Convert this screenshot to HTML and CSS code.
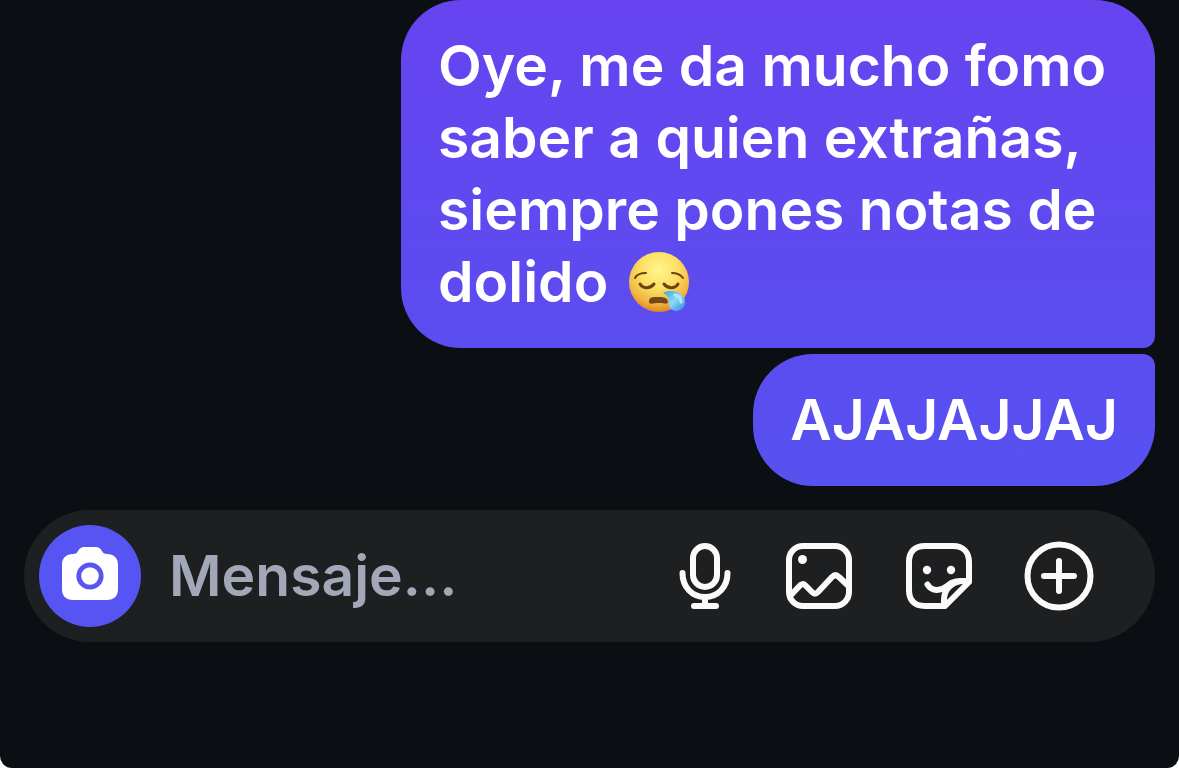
FILE: index.html
```html
<!DOCTYPE html>
<html lang="es">

<head>
    <meta charset="UTF-8">
    <meta name="viewport" content="width=device-width, initial-scale=1">
    <title>Mensajes</title>
    <link rel="stylesheet" href="styles.css">
</head>

<body>

    <main class="chat">
        <section class="messages">
            <p class="bubble first">Oye, me da mucho fomo saber a quien extrañas, siempre pones notas de dolido
                <svg class="emoji" viewBox="0 0 60 60" role="img" aria-label="Cara somnolienta">
                    <defs>
                        <radialGradient id="face" cx="50%" cy="30%" r="70%">
                            <stop offset="0" stop-color="#fff58f" />
                            <stop offset="0.45" stop-color="#fbe064" />
                            <stop offset="0.8" stop-color="#f2b640" />
                            <stop offset="1" stop-color="#df8427" />
                        </radialGradient>
                        <linearGradient id="drop" x1="0" y1="0" x2="1" y2="1">
                            <stop offset="0" stop-color="#3aa4e0" />
                            <stop offset="0.5" stop-color="#8bd8fb" />
                            <stop offset="1" stop-color="#2589d6" />
                        </linearGradient>
                    </defs>
                    <circle cx="30" cy="30" r="30" fill="url(#face)" />
                    <g fill="none" stroke="#70400d" stroke-linecap="round">
                        <path d="M6 26C8 22 12 21 17 21M43 21C48 21 51 22 54 26" stroke-width="2" />
                        <path d="M11 32C14 37 21 37 25 32M35 32C39 37 46 37 49 32" stroke-width="3" />
                    </g>
                    <path d="M20 50C20 44 25 45 30 45C35 45 39 46 39 50C39 53 35 51 30 51C25 51 20 53 20 50Z" fill="#75471c" />
                    <path d="M34 41C41 37 55 39 56 49C57 55 52 59 47 59C42 58 39 55 40 50C40 45 38 43 34 41Z" fill="url(#drop)" />
                    <path d="M46 43C50 44 52 46 52 50" fill="none" stroke="#b4e8fd" stroke-width="3" stroke-linecap="round" />
                </svg>
            </p>
            <p class="bubble last">AJAJAJJAJ</p>
        </section>

        <form class="composer">
            <button class="camera" type="button" aria-label="Cámara">
                <svg viewBox="0 2 60 60">
                    <path d="M13 10C16 10 17 9 18 7C20 4 21 3 25 3H35C39 3 40 4 42 7C43 9 44 10 47 10C54 10 58 14 58 21V45C58 52 54 56 47 56H13C6 56 2 52 2 45V21C2 14 6 10 13 10Z" fill="#fff" />
                    <circle cx="30" cy="32" r="11.2" fill="#fff" stroke="#5b55ef" stroke-width="4.8" />
                </svg>
            </button>
            <input class="text" type="text" placeholder="Mensaje..." aria-label="Mensaje">
            <div class="actions">
                <button class="mic" type="button" aria-label="Mensaje de voz">
                    <svg viewBox="0 0 60 72">
                        <rect x="18" y="6" width="24" height="41" rx="12" />
                        <path d="M7.500 33C7.500 47 17 57 30 57S52.500 47 52.500 33M30 57V66M19 66H41" />
                    </svg>
                </button>
                <button type="button" aria-label="Galería">
                    <svg viewBox="0 0 72 72">
                        <rect x="6" y="6" width="60" height="60" rx="14" />
                        <circle class="dot" cx="19.500" cy="19.500" r="4.500" />
                        <path d="M7 56L16.500 46Q19.500 42.500 22.500 45.500L29 52Q32 55 35 52L49 37Q52.500 33.500 56 37L66 46.500" />
                    </svg>
                </button>
                <button type="button" aria-label="Stickers">
                    <svg viewBox="0 0 72 72">
                        <path d="M42 66H22C11 66 6 60 6 50V22C6 11 12 6 22 6H50C60 6 66 12 66 22V42L42 66Z" />
                        <path d="M24.500 44.500C29 52 38 51 44 46C51 40 57 41 66 41" />
                        <path d="M41 66V60C41 50 47 44 57 41" />
                        <circle class="dot" cx="24" cy="30" r="4.200" />
                        <circle class="dot" cx="48" cy="30" r="4.200" />
                    </svg>
                </button>
                <button type="button" aria-label="Más">
                    <svg viewBox="0 0 72 72">
                        <circle cx="36" cy="36" r="31.500" />
                        <path d="M36 21V51M21 36H51" />
                    </svg>
                </button>
            </div>
        </form>
    </main>

</body>

</html>
```
FILE: styles.css
```css
* {
    box-sizing: border-box;
}

html {
    background: #fff;
}

body {
    margin: 0;
    font-family: Inter, "Liberation Sans", sans-serif;
    font-size: 57px;
    font-weight: 600;
    line-height: 72px;
}

.chat {
    min-height: 100vh;
    padding: 0 24px;
    background: #0b0f13;
    border-radius: 0 0 12px 12px;
}

.messages {
    display: flex;
    flex-direction: column;
    align-items: flex-end;
    gap: 6px;
    margin-bottom: 24px;
}

.bubble {
    max-width: calc(100% * 2 / 3);
    margin: 0;
    padding: 30px 37px;
    border-radius: 60px;
    color: #fff;
}

.first {
    background: linear-gradient(#6644f0, #5b4df0);
    border-bottom-right-radius: 12px;
}

.last {
    background: linear-gradient(#5b4df0, #5751f0);
    border-top-right-radius: 12px;
}

.emoji {
    width: 60px;
    height: 60px;
    margin-left: 6px;
    vertical-align: -10px;
}

.composer {
    display: flex;
    align-items: center;
    padding: 15px 60px 15px 15px;
    background: #1e1f20;
    border-radius: 66px;
}

button {
    display: block;
    padding: 0;
    border: 0;
    background: none;
    cursor: pointer;
}

svg {
    fill: none;
    stroke-width: 6px;
}

.camera {
    flex: none;
    padding: 21px;
    background: #5655f3;
    border-radius: 50%;
}

.camera svg {
    display: block;
    width: 60px;
    height: 60px;
}

.text {
    flex: 1;
    min-width: 0;
    height: 72px;
    margin-left: 28px;
    padding: 0;
    border: 0;
    outline: 0;
    background: none;
    color: #fff;
    font: inherit;
}

.text::placeholder {
    color: #a3a8b8;
    opacity: 1;
}

.actions {
    display: flex;
    gap: 48px;
}

.actions svg {
    display: block;
    width: 72px;
    height: 72px;
    stroke: #fafafa;
    stroke-linecap: round;
    stroke-linejoin: round;
}

.actions .mic svg {
    width: 60px;
}

.actions .dot {
    fill: #fafafa;
    stroke: none;
}
```
